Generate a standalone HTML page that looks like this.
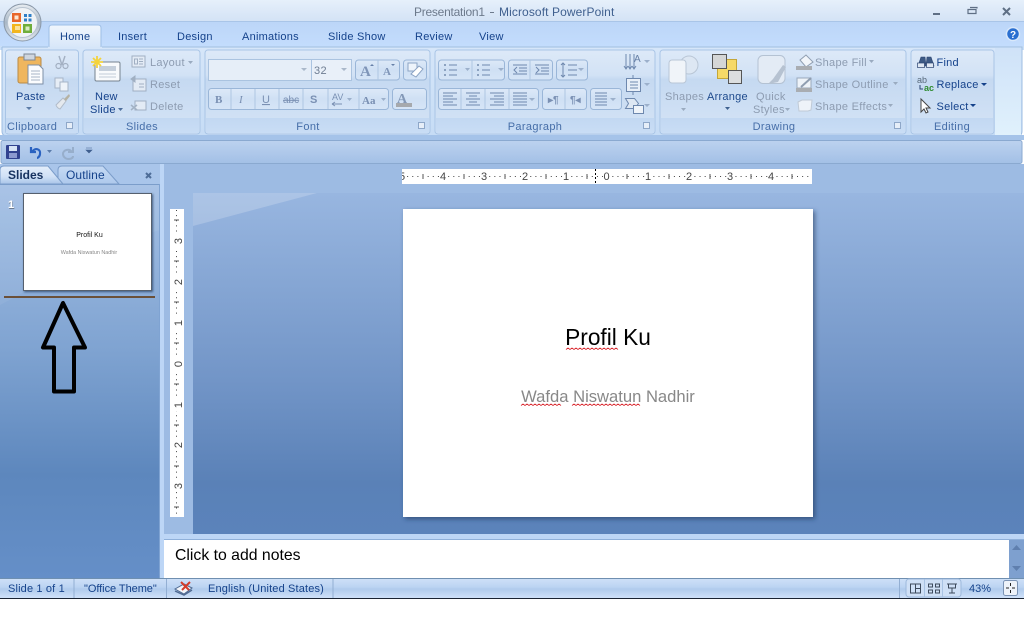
<!DOCTYPE html>
<html><head><meta charset="utf-8"><style>
html,body{margin:0;padding:0;width:1024px;height:632px;overflow:hidden;background:#fff}
svg{display:block}
text{font-family:"Liberation Sans",sans-serif;font-size:11px}
.t{fill:#15428b;font-size:11px;letter-spacing:.25px}
.d{fill:#8d9cb1;letter-spacing:.3px}
.a{fill:#1e4a8c;letter-spacing:.25px}
.c{fill:#466ea8;letter-spacing:.35px;text-anchor:middle}
.s{fill:#15428b;letter-spacing:.15px}
.r{fill:#444;font-size:11px;text-anchor:middle}
.b{fill:url(#btn);stroke:#9ab6d8;stroke-width:1}
</style></head><body>
<svg width="1024" height="632" viewBox="0 0 1024 632" xmlns="http://www.w3.org/2000/svg">
<defs>
<linearGradient id="title" x1="0" y1="0" x2="0" y2="1"><stop offset="0" stop-color="#e6f0fb"/><stop offset="1" stop-color="#d3e2f5"/></linearGradient>
<linearGradient id="tabs" x1="0" y1="0" x2="0" y2="1"><stop offset="0" stop-color="#bcd6f8"/><stop offset="1" stop-color="#c3dcfd"/></linearGradient>
<linearGradient id="rib" x1="0" y1="0" x2="0" y2="1"><stop offset="0" stop-color="#d6e6f9"/><stop offset="1" stop-color="#c6dcf5"/></linearGradient>
<linearGradient id="rend" x1="0" y1="0" x2="0" y2="1"><stop offset="0" stop-color="#cfe2f8"/><stop offset="1" stop-color="#e0f1fc"/></linearGradient>
<linearGradient id="grp" x1="0" y1="0" x2="0" y2="1"><stop offset="0" stop-color="#dde9f8"/><stop offset=".3" stop-color="#d2e2f5"/><stop offset=".35" stop-color="#c5d9f1"/><stop offset="1" stop-color="#d5e4f6"/></linearGradient>
<linearGradient id="cap" x1="0" y1="0" x2="0" y2="1"><stop offset="0" stop-color="#c2d8f2"/><stop offset="1" stop-color="#c9ddf5"/></linearGradient>
<linearGradient id="btn" x1="0" y1="0" x2="0" y2="1"><stop offset="0" stop-color="#dde9f8"/><stop offset=".5" stop-color="#cfe0f4"/><stop offset="1" stop-color="#d6e5f7"/></linearGradient>
<linearGradient id="qat" x1="0" y1="0" x2="0" y2="1"><stop offset="0" stop-color="#bcd2ef"/><stop offset="1" stop-color="#a3c0e6"/></linearGradient>
<linearGradient id="left" x1="0" y1="0" x2="0" y2="1"><stop offset="0" stop-color="#a9c4e8"/><stop offset=".45" stop-color="#7fa3d1"/><stop offset=".75" stop-color="#5d87bd"/><stop offset="1" stop-color="#658fc8"/></linearGradient>
<linearGradient id="main" x1="0" y1="0" x2="0" y2="1"><stop offset="0" stop-color="#98b6e0"/><stop offset=".55" stop-color="#7295c7"/><stop offset=".85" stop-color="#5a81b7"/><stop offset="1" stop-color="#5b83bb"/></linearGradient>
<linearGradient id="stat" x1="0" y1="0" x2="0" y2="1"><stop offset="0" stop-color="#cfe1f8"/><stop offset=".45" stop-color="#bcd4f2"/><stop offset=".55" stop-color="#b0cbec"/><stop offset="1" stop-color="#cfe1f9"/></linearGradient>
<linearGradient id="tab1" x1="0" y1="0" x2="0" y2="1"><stop offset="0" stop-color="#e4eefb"/><stop offset=".6" stop-color="#cfe0f6"/><stop offset="1" stop-color="#a9c4e8"/></linearGradient>
<linearGradient id="tab2" x1="0" y1="0" x2="0" y2="1"><stop offset="0" stop-color="#c6daf4"/><stop offset="1" stop-color="#aec9ec"/></linearGradient>
<linearGradient id="home" x1="0" y1="0" x2="0" y2="1"><stop offset="0" stop-color="#f0f6fd"/><stop offset="1" stop-color="#d8e7f9"/></linearGradient>
<linearGradient id="orb" x1="0" y1="0" x2="0" y2="1"><stop offset="0" stop-color="#e8edf2"/><stop offset=".5" stop-color="#a9b7c6"/><stop offset="1" stop-color="#e3e9ef"/></linearGradient>
<filter id="sh" x="-10%" y="-10%" width="125%" height="125%"><feDropShadow dx="2" dy="2" stdDeviation="2.5" flood-color="#1d3557" flood-opacity=".6"/></filter>
<filter id="sh2" x="-10%" y="-10%" width="125%" height="125%"><feDropShadow dx="1" dy="1" stdDeviation="1" flood-color="#1d3557" flood-opacity=".7"/></filter>
</defs>

<!-- title bar -->
<rect width="1024" height="22" fill="url(#title)"/>
<rect y="21" width="1024" height="1" fill="#a9c5e8"/>
<text x="414" y="16" textLength="71" style="font-size:12px;fill:#6d7a8c">Presentation1</text>
<rect x="490" y="12" width="4" height="1" fill="#6d7a8c"/>
<text x="499" y="16" style="font-size:12px;fill:#40608f;letter-spacing:.1px">Microsoft PowerPoint</text>
<rect x="933" y="13" width="7" height="2" fill="#5f6f85"/>
<path d="M968 9.500h8v4h-8zM970 7.500h7v1" fill="none" stroke="#5f6f85" stroke-width="1.200"/>
<path d="M1003 8l7 7M1010 8l-7 7" stroke="#5f6f85" stroke-width="2" fill="none"/>

<!-- tab row -->
<rect y="22" width="1024" height="24" fill="url(#tabs)"/>
<rect y="46" width="1024" height="4" fill="#c9dff8"/>
<path d="M49 47V28q0-3 3-3h46q3 0 3 3v19" fill="url(#home)" stroke="#9ebfe6"/>
<text x="60" y="40" class="t">Home</text>
<text x="118" y="40" class="t">Insert</text>
<text x="177" y="40" class="t">Design</text>
<text x="242" y="40" class="t">Animations</text>
<text x="328" y="40" class="t">Slide Show</text>
<text x="415" y="40" class="t">Review</text>
<text x="479" y="40" class="t">View</text>
<circle cx="1013" cy="34" r="6.500" fill="#2a6fd0" stroke="#d9e8fa" stroke-width="1.500"/>
<text x="1013" y="38" text-anchor="middle" style="font-size:10px;font-weight:bold;fill:#fff">?</text>

<!-- ribbon -->
<path d="M2 47H48M102 47H1022V131q0 5-5 5H7q-5 0-5-5V47" fill="url(#rib)" stroke="#9dbde2"/>
<rect x="995" y="48" width="26" height="87" fill="url(#rend)"/>
<g fill="url(#grp)" stroke="#a9c5e6">
<rect x="5.500" y="50" width="73" height="84" rx="3"/>
<rect x="83" y="50" width="117" height="84" rx="3"/>
<rect x="205" y="50" width="225" height="84" rx="3"/>
<rect x="435" y="50" width="220" height="84" rx="3"/>
<rect x="660" y="50" width="246" height="84" rx="3"/>
<rect x="911" y="50" width="83" height="84" rx="3"/>
</g>
<g fill="url(#cap)">
<rect x="6" y="118" width="72" height="15"/><rect x="84" y="118" width="115" height="15"/><rect x="206" y="118" width="223" height="15"/><rect x="436" y="118" width="218" height="15"/><rect x="661" y="118" width="244" height="15"/><rect x="912" y="118" width="81" height="15"/>
</g>
<text x="7" y="130" class="c" style="text-anchor:start">Clipboard</text>
<text x="142" y="130" class="c">Slides</text>
<text x="308" y="130" class="c">Font</text>
<text x="535" y="130" class="c">Paragraph</text>
<text x="774" y="130" class="c">Drawing</text>
<text x="952" y="130" class="c">Editing</text>
<g fill="#e6eef8" stroke="#8ea7c8">
<rect x="66.500" y="122.500" width="6" height="6"/><rect x="418.500" y="122.500" width="6" height="6"/><rect x="643.500" y="122.500" width="6" height="6"/><rect x="894.500" y="122.500" width="6" height="6"/>
</g>

<!-- orb -->
<circle cx="22.500" cy="22.500" r="18.500" fill="url(#orb)" stroke="#8a98a8"/>
<circle cx="22.500" cy="22.500" r="15" fill="#f0f3f6" stroke="#b8c4d0"/>
<path d="M12 13h9v9h-9z" fill="#e8672a"/><path d="M14.500 15.500h4v4h-4z" fill="#fbe7d2"/>
<path d="M12 24h9v9h-9z" fill="#f2b61e"/><path d="M15 26h5v4h-5z" fill="#fbe39a"/>
<path d="M23 24h9v9h-9z" fill="#6fae3a"/><path d="M25.500 26.500h4v4h-4z" fill="#d9ecc4"/>
<g fill="#2f7fc7"><rect x="24" y="14" width="3" height="3"/><rect x="28.500" y="14" width="3" height="3"/><rect x="24" y="18.500" width="3" height="3"/><rect x="28.500" y="18.500" width="3" height="3"/></g>

<!-- Clipboard -->
<rect x="18" y="57" width="23" height="26" rx="2" fill="#efb65e" stroke="#b98a45"/>
<rect x="24" y="54" width="11" height="6" fill="#cfd6df" stroke="#7d8794"/>
<path d="M28 65h11l4 4v15H28z" fill="#fbfcfe" stroke="#7e8fa6"/>
<path d="M31 71h9M31 74h9M31 77h9M31 80h9" stroke="#a7b5c7"/>
<text x="16" y="100" class="t">Paste</text>
<path d="M26 107h6l-3 3z" fill="#5d7da8"/>
<path d="M59 56l3 9M65 56l-3 9" stroke="#a3b0c2" stroke-width="1.400" fill="none"/><circle cx="58.500" cy="66" r="2.500" fill="none" stroke="#a3b0c2" stroke-width="1.200"/><circle cx="65.500" cy="66" r="2.500" fill="none" stroke="#a3b0c2" stroke-width="1.200"/>
<rect x="55" y="78" width="8" height="10" fill="#e6edf6" stroke="#a6b4c7"/><rect x="60" y="82" width="8" height="9" fill="#eef3f9" stroke="#a6b4c7"/>
<path d="M56 105l7-7 3 3-6 8q-3-1-4-4z" fill="#e5e9ee" stroke="#b2bcc9"/><path d="M64 99l5-5 1 2-4 5z" fill="#b5b2a3"/>

<!-- Slides -->
<rect x="95" y="62" width="25" height="19" rx="1.500" fill="#f8fafc" stroke="#76838f"/>
<rect x="99" y="66" width="17" height="5" fill="#c5cfdb"/><path d="M99 74h17M99 77h17" stroke="#c2ccd9"/>
<path d="M97 56v12M91 62h12M93 58l8 8M101 58l-8 8" stroke="#f4d33c" stroke-width="1.800"/>
<text x="95" y="100" class="t">New</text>
<text x="90" y="113" class="t">Slide</text>
<path d="M118 108h5l-2.500 3z" fill="#4f6f9c"/>
<rect x="132" y="56" width="13" height="11" fill="#e3ebf5" stroke="#a0afc2"/><path d="M139 59h4M139 61.500h4M139 64h4M134.500 59h3v5h-3z" stroke="#a0afc2" fill="none"/>
<text x="150" y="66" class="d">Layout</text><path d="M188 61h5l-2.500 3z" fill="#9aabc0"/>
<rect x="133" y="79" width="13" height="12" fill="#e3ebf5" stroke="#a0afc2"/><path d="M131 79l4-3v6zM135 79h5" fill="#a0afc2" stroke="#a0afc2"/><path d="M139 84h5M139 87h5" stroke="#a0afc2"/>
<text x="150" y="88" class="d">Reset</text>
<rect x="135" y="101" width="11" height="9" fill="#e3ebf5" stroke="#a0afc2"/><path d="M131 105l6 5M137 105l-6 5" stroke="#a3b2c4" stroke-width="1.500"/>
<text x="150" y="110" class="d">Delete</text>

<!-- Font -->
<rect x="208.500" y="59.500" width="103" height="21" fill="#e6eef8" stroke="#aac3e0"/>
<rect x="311.500" y="59.500" width="40" height="21" fill="#e9f0f9" stroke="#aac3e0"/>
<path d="M301 68h6l-3 3zM341 68h6l-3 3z" fill="#aab8ca"/>
<text x="314" y="74" style="font-size:11px;fill:#6e7d92;letter-spacing:.4px">32</text>
<rect x="355.500" y="60" width="44" height="20" rx="3" class="b"/><path d="M378 60v20" stroke="#aec6e2"/>
<text x="360" y="76" style="font-size:15px;font-family:'Liberation Serif',serif;fill:#7f95b8;font-weight:bold">A</text><path d="M370 66l2-2 2 2z" fill="#6680a8"/>
<text x="383" y="75" style="font-size:11px;font-family:'Liberation Serif',serif;fill:#7f95b8;font-weight:bold">A</text><path d="M391 64l2 2 2-2z" fill="#6680a8"/>
<rect x="403.500" y="60" width="23" height="20" rx="3" class="b"/>
<rect x="408" y="63" width="9" height="8" fill="#eef4fb" stroke="#8ca4c4"/><path d="M411 74l8-8 4 3-7 8z" fill="#fff" stroke="#8ca4c4"/>
<rect x="208.500" y="88.500" width="180" height="21" rx="3" class="b"/>
<path d="M231 89v20M255 89v20M279 89v20M303 89v20M328 89v20M359 89v20" stroke="#aec6e2"/>
<text x="215" y="103" style="font-size:11px;font-weight:bold;fill:#7a90b3;font-family:'Liberation Serif',serif">B</text>
<text x="239" y="103" style="font-size:11px;font-style:italic;fill:#7a90b3;font-family:'Liberation Serif',serif">I</text>
<text x="262" y="103" style="font-size:11px;fill:#7a90b3;text-decoration:underline">U</text>
<text x="283" y="103" style="font-size:10px;fill:#7a90b3;text-decoration:line-through">abc</text>
<text x="310" y="103" style="font-size:11px;font-weight:bold;fill:#7a90b3">S</text>
<text x="332" y="100" style="font-size:9px;fill:#7a90b3">AV</text>
<text x="362" y="104" style="font-size:11px;font-weight:bold;fill:#7a90b3;font-family:'Liberation Serif',serif">Aa</text>
<path d="M332 104h10M332 104l3-2M332 104l3 2" stroke="#7a90b3" fill="none"/>
<path d="M347 98h5l-2.500 3zM381 98h5l-2.500 3zM417 98h6l-3 3z" fill="#9cb0cb"/>
<rect x="392.500" y="88.500" width="34" height="21" rx="3" class="b"/>
<text x="397" y="103" style="font-size:14px;font-weight:bold;fill:#8398b7;font-family:'Liberation Serif',serif">A</text>
<rect x="396" y="103" width="16" height="4" fill="#a6a9ad"/>

<!-- Paragraph -->
<rect x="438.500" y="60" width="66" height="20" rx="3" class="b"/><path d="M472 60v20" stroke="#aec6e2"/>
<rect x="508.500" y="60" width="44" height="20" rx="3" class="b"/><path d="M530 60v20" stroke="#aec6e2"/>
<rect x="556.500" y="60" width="31" height="20" rx="3" class="b"/>
<rect x="438.500" y="88.500" width="100" height="21" rx="3" class="b"/><path d="M461 89v20M485 89v20M509 89v20" stroke="#aec6e2"/>
<rect x="542.500" y="88.500" width="44" height="21" rx="3" class="b"/><path d="M565 89v20" stroke="#aec6e2"/>
<rect x="590.500" y="88.500" width="31" height="21" rx="3" class="b"/>
<g stroke="#6e88ae" fill="none">
<path d="M449 65h8M449 70h8M449 75h8M482 65h8M482 70h8M482 75h8"/>
<path d="M444 65h2M444 70h2M444 75h2M477 65h2M477 70h2M477 75h2" stroke-width="2" stroke="#8ca2c0"/>
<path d="M513 65h14M519 68h8M519 71h8M513 74h14M517 67l-3 3 3 3"/>
<path d="M535 65h14M541 68h8M541 71h8M535 74h14M536 67l3 3-3 3"/>
<path d="M563 63v14M561 65l2-2 2 2M561 75l2 2 2-2M568 65h9M568 70h9M568 75h9"/>
<path d="M443 93h14M443 96h10M443 99h14M443 102h10M443 105h14"/>
<path d="M466 93h14M469 96h8M466 99h14M469 102h8M466 105h14"/>
<path d="M490 93h14M494 96h10M490 99h14M494 102h10M490 105h14"/>
<path d="M513 93h14M513 96h14M513 99h14M513 102h14M513 105h14"/>
<path d="M595 93h12M595 96h12M595 99h12M595 102h12M595 105h12"/>
<path d="M626 54v14M630 54v14M634 54v14M624 66l2 3 2-3M628 66l2 3 2-3M632 66l2 3 2-3"/>
<rect x="626.500" y="78.500" width="14" height="13" fill="#e8eff8"/>
<path d="M630 82h8M630 85h8M630 88h8M633 75v3M633 92v3"/>
<path d="M625.500 98.500h9l4 5-4 5h-9l3-5z" fill="#dde7f3"/>
<rect x="633.500" y="105.500" width="10" height="8" fill="#eef3f9"/>
</g>
<text x="548" y="103" style="font-size:10px;font-weight:bold;fill:#7a90b3">▸¶</text>
<text x="570" y="103" style="font-size:10px;font-weight:bold;fill:#7a90b3">¶◂</text>
<text x="634" y="62" style="font-size:10px;fill:#6880a6">A</text>
<path d="M465 68h5l-2.500 3zM498 68h6l-3 3zM578 68h6l-3 3zM529 98h6l-3 3zM610 98h6l-3 3zM644 60h6l-3 3zM644 83h6l-3 3zM644 104h6l-3 3z" fill="#9cb0cb"/>

<!-- Drawing -->
<circle cx="689" cy="65" r="9" fill="#dde7f3" stroke="#b9c6d6"/>
<rect x="669" y="60" width="17" height="23" rx="3" fill="#f0f4f9" stroke="#b9c6d6"/>
<text x="665" y="100" class="d">Shapes</text><path d="M681 108h5l-2.500 3z" fill="#9aabc0"/>
<rect x="712.500" y="54.500" width="14" height="14" fill="#d5d6d6" stroke="#555"/>
<rect x="717.500" y="59.500" width="19" height="19" fill="#f6d968" stroke="#c4a638"/>
<rect x="712.500" y="54.500" width="14" height="14" fill="#d5d6d6" stroke="#555"/>
<rect x="728.500" y="70.500" width="13" height="13" fill="#dcdedf" stroke="#555"/>
<text x="707" y="100" class="a">Arrange</text><path d="M725 107h5l-2.500 3z" fill="#3f618f"/>
<rect x="758" y="55.500" width="27" height="28" rx="5" fill="#e3ebf5" stroke="#b4c2d3"/>
<path d="M768 84l5-5 10-14 3 2-8 15z" fill="#b6c2d1"/>
<text x="756" y="100" class="d">Quick</text>
<text x="753" y="113" class="d">Styles</text><path d="M785 108h5l-2.500 3z" fill="#9aabc0"/>
<path d="M800 60l6-5 7 7-7 5z" fill="#f1f5fa" stroke="#8f9eb1"/><rect x="796" y="66" width="16" height="4" fill="#a9adb2"/>
<text x="815" y="66" class="d">Shape Fill</text><path d="M869 60h5l-2.500 3z" fill="#9aabc0"/>
<rect x="797" y="78" width="14" height="10" fill="#eef3f9" stroke="#9aa9bc"/><path d="M801 87l10-9" stroke="#8f9eb1" stroke-width="2"/><rect x="796" y="88" width="16" height="4" fill="#a9adb2"/>
<text x="815" y="88" class="d">Shape Outline</text><path d="M893 82h5l-2.500 3z" fill="#9aabc0"/>
<path d="M798 102l4-2h10l-1 10-3 1h-9z" fill="#eef3f9" stroke="#c0cad6"/>
<text x="815" y="110" class="d">Shape Effects</text><path d="M888 104h5l-2.500 3z" fill="#9aabc0"/>

<!-- Editing -->
<path d="M918 66l3-9h4l1 9zM926 66l1-9h4l3 9z" fill="#3d5a85" stroke="#2b4470" stroke-width=".6"/>
<rect x="917.500" y="63" width="7" height="4.500" fill="#dfe8f3" stroke="#2b4470" stroke-width=".7"/><rect x="926.500" y="63" width="7" height="4.500" fill="#dfe8f3" stroke="#2b4470" stroke-width=".7"/>
<text x="936.500" y="66" class="t">Find</text>
<text x="917" y="83" style="font-size:9px;fill:#5b6b7c">ab</text>
<text x="924" y="91" style="font-size:9px;font-weight:bold;fill:#2e8b2e">ac</text>
<path d="M920 85v4h3" stroke="#2b4470" fill="none"/>
<text x="936.500" y="88" class="t">Replace</text><path d="M981 83h6l-3 3z" fill="#15428b"/>
<path d="M921 99v13l3-3 2 4 2-1-2-4h4z" fill="#fff" stroke="#444"/>
<text x="936.500" y="110" class="t">Select</text><path d="M970 104h6l-3 3z" fill="#15428b"/>

<!-- separator + QAT -->
<rect y="135" width="1024" height="5" fill="#a5c3e9"/>
<rect x="1" y="140.500" width="1021" height="23" rx="2" fill="url(#qat)" stroke="#8aa9d0"/>
<rect x="6" y="145" width="14" height="14" rx="1" fill="#31428f"/><rect x="9" y="146" width="8" height="5" fill="#d7e4f5"/><rect x="9" y="153" width="8" height="5" fill="#8c9ad0"/>
<path d="M31 147v5h5M32 152c3-5 9-3 8 2 0 2-2 4-3 4" fill="none" stroke="#2a62c0" stroke-width="2.200"/>
<path d="M47 150h5l-2.500 3z" fill="#5b7cab"/>
<path d="M73 147v5h-5M72 152c-3-4-9-2-9 2 0 3 3 5 5 5 3 0 5-1 5-3" fill="none" stroke="#97aecb" stroke-width="2"/>
<path d="M86 148h6M86 150h6l-3 3z" fill="#3f5f8f" stroke="#3f5f8f" stroke-width=".6"/>

<!-- main -->
<rect y="164" width="160" height="414" fill="url(#left)"/>
<path d="M0 305C40 285 90 250 160 230V164H0z" fill="#fff" opacity=".06"/>
<rect x="159" y="164" width="5" height="414" fill="#bdd6f6"/>
<rect x="159" y="164" width="1" height="414" fill="#7fa3d2"/>
<rect x="164" y="164" width="860" height="370" fill="#9dbbe3"/>
<rect x="193" y="193" width="831" height="341" fill="url(#main)"/>
<path d="M193 193H317L193 226z" fill="#fff" opacity=".2"/>
<rect x="164" y="534" width="860" height="6" fill="#bdd6f6"/>
<rect x="164" y="539" width="860" height="1" fill="#8fb0da"/>

<!-- panel tabs -->
<rect y="164" width="160" height="20" fill="#a9c5ea"/>
<path d="M119 184L103 166H62Q58 166 58 170V184z" fill="url(#tab2)" stroke="#7b9dca"/>
<path d="M63 184L48 166H4Q0 166 0 170V184z" fill="url(#tab1)" stroke="#7b9dca"/>
<rect y="184" width="159" height="1" fill="#7b9dca"/>
<text x="8" y="179" style="font-size:12px;font-weight:bold;fill:#15315f">Slides</text>
<text x="66" y="179" style="font-size:12px;fill:#15428b;letter-spacing:.1px">Outline</text>
<path d="M146 173l5 5M151 173l-5 5" stroke="#4e6d98" stroke-width="2"/>

<!-- thumbnail -->
<text x="8.500" y="209" style="font-size:11px;font-weight:bold;fill:#6b7b90">1</text>
<text x="8" y="208" style="font-size:11px;font-weight:bold;fill:#fff">1</text>
<rect x="23.500" y="193.500" width="128" height="97" fill="#fff" stroke="#56606e" filter="url(#sh2)"/>
<text x="89.500" y="237" text-anchor="middle" style="font-size:7px;fill:#111">Profil Ku</text>
<text x="89" y="254" text-anchor="middle" style="font-size:5.400px;fill:#888">Wafda Niswatun Nadhir</text>
<rect x="4" y="296" width="151" height="2" fill="#6b5038"/>
<path d="M63 303L43 347.500H54V391.500H74V347.500H85z" fill="none" stroke="#000" stroke-width="4" stroke-linejoin="round"/>

<!-- top ruler -->
<rect x="402" y="169" width="410" height="15" fill="#fff"/>
<path d="M402 176.500H812" stroke="#444" stroke-width="1" stroke-dasharray="1 4.130" fill="none"/>
<g stroke="#555"><path d="M423 174v5M464 174v5M505 174v5M546 174v5M587 174v5M627 174v5M669 174v5M710 174v5M751 174v5M792 174v5"/></g>
<path d="M595.500 169v15" stroke="#000" stroke-dasharray="2 2"/>
<g fill="#fff">
<rect x="440" y="170" width="7" height="13"/><rect x="481" y="170" width="7" height="13"/><rect x="522" y="170" width="7" height="13"/><rect x="563" y="170" width="7" height="13"/><rect x="603" y="170" width="7" height="13"/><rect x="645" y="170" width="7" height="13"/><rect x="686" y="170" width="7" height="13"/><rect x="727" y="170" width="7" height="13"/><rect x="768" y="170" width="7" height="13"/><rect x="402" y="170" width="4" height="13"/>
</g>
<rect x="396" y="169" width="6" height="15" fill="#9dbbe3"/>
<text x="402" y="180" class="r">5</text><text x="443" y="180" class="r">4</text><text x="484" y="180" class="r">3</text><text x="525" y="180" class="r">2</text><text x="566" y="180" class="r">1</text><text x="606.500" y="180" class="r">0</text><text x="648" y="180" class="r">1</text><text x="689" y="180" class="r">2</text><text x="730" y="180" class="r">3</text><text x="771" y="180" class="r">4</text>
<rect x="396" y="169" width="6" height="15" fill="#9dbbe3"/>

<!-- left ruler -->
<rect x="170" y="209" width="14" height="308" fill="#fff"/>
<path d="M176.500 210V517" stroke="#444" stroke-width="1" stroke-dasharray="1 4.130" fill="none"/>
<g stroke="#555"><path d="M174 220h5M174 261h5M174 302h5M174 343h5M174 384h5M174 425h5M174 466h5M174 507h5"/></g>
<g fill="#fff"><rect x="171" y="235" width="12" height="12"/><rect x="171" y="276" width="12" height="12"/><rect x="171" y="317" width="12" height="12"/><rect x="171" y="358" width="12" height="12"/><rect x="171" y="399" width="12" height="12"/><rect x="171" y="439" width="12" height="12"/><rect x="171" y="480" width="12" height="12"/></g>
<text transform="translate(182,241) rotate(-90)" class="r">3</text>
<text transform="translate(182,282) rotate(-90)" class="r">2</text>
<text transform="translate(182,323) rotate(-90)" class="r">1</text>
<text transform="translate(182,364) rotate(-90)" class="r">0</text>
<text transform="translate(182,405) rotate(-90)" class="r">1</text>
<text transform="translate(182,445) rotate(-90)" class="r">2</text>
<text transform="translate(182,486) rotate(-90)" class="r">3</text>

<!-- slide -->
<rect x="403" y="209" width="410" height="308" fill="#fff" filter="url(#sh)"/>
<text x="608" y="345" text-anchor="middle" style="font-size:22.700px;fill:#000">Profil Ku</text>
<text x="608" y="402" text-anchor="middle" style="font-size:16.600px;fill:#888">Wafda Niswatun Nadhir</text>
<path d="M566 349.500l2-1.500 2 1.500 2-1.500 2 1.500 2-1.500 2 1.500 2-1.500 2 1.500 2-1.500 2 1.500 2-1.500 2 1.500 2-1.500 2 1.500 2-1.500 2 1.500 2-1.500 2 1.500 2-1.500 2 1.500 2-1.500 2 1.500 2-1.500 2 1.500 2-1.500 2 1.500" fill="none" stroke="#d8232a" stroke-width=".8"/>
<path d="M521 405.500l2-1.500 2 1.500 2-1.500 2 1.500 2-1.500 2 1.500 2-1.500 2 1.500 2-1.500 2 1.500 2-1.500 2 1.500 2-1.500 2 1.500 2-1.500 2 1.500 2-1.500 2 1.500 2-1.500 2 1.500M572 405.500l2-1.500 2 1.500 2-1.500 2 1.500 2-1.500 2 1.500 2-1.500 2 1.500 2-1.500 2 1.500 2-1.500 2 1.500 2-1.500 2 1.500 2-1.500 2 1.500 2-1.500 2 1.500 2-1.500 2 1.500 2-1.500 2 1.500 2-1.500 2 1.500 2-1.500 2 1.500 2-1.500 2 1.500 2-1.500 2 1.500 2-1.500 2 1.500 2-1.500 2 1.500" fill="none" stroke="#d8232a" stroke-width=".8"/>

<!-- notes -->
<rect x="164" y="540" width="845" height="38" fill="#fff"/>
<text x="175" y="560" style="font-size:15.800px;fill:#000">Click to add notes</text>
<rect x="1009" y="540" width="15" height="38" fill="#7ea0cf"/>
<path d="M1012 550l4.500-5 4.500 5zM1012 566l4.500 5 4.500-5z" fill="#5f7fae"/>

<!-- status bar -->
<rect y="578" width="1024" height="20" fill="url(#stat)"/>
<rect y="578" width="1024" height="1" fill="#6f8fb0"/>
<rect y="598" width="1024" height="1" fill="#1a2433"/>
<path d="M74 579v19M166.500 579v19M333 579v19M899.500 579v19" stroke="#93afd3"/>
<text x="8" y="592" class="s">Slide 1 of 1</text>
<text x="84" y="592" style="fill:#15428b;letter-spacing:-.05px">"Office Theme"</text>
<path d="M175 589l9-5 8 4-8 6z" fill="#f2f5fa" stroke="#4f6a92"/>
<path d="M175 591l9 4 8-5" fill="none" stroke="#4f6a92" stroke-width="1.500"/>
<path d="M181 582l8 8M190 582l-8 8" stroke="#d33d2c" stroke-width="2"/>
<text x="208" y="592" class="s">English (United States)</text>
<rect x="906" y="579" width="55" height="18" rx="3" fill="#cfe0f6" stroke="#9db9dc"/>
<path d="M924.500 579v18M942.500 579v18" stroke="#a9c3e3"/>
<path d="M910.500 584h10v9h-10zM915.500 584v9M915.500 588.500h5" fill="none" stroke="#3d4a5c"/>
<path d="M928.500 584h4v3h-4zM935.500 584h4v3h-4zM928.500 590h4v3h-4zM935.500 590h4v3h-4z" fill="none" stroke="#3d4a5c"/>
<path d="M947 584h10M948.500 584v4h7v-4M952 588v5M949 593h6" fill="none" stroke="#3d4a5c"/>
<text x="969" y="592" style="font-size:11px;fill:#15428b">43%</text>
<rect x="1003.500" y="580.500" width="14" height="15" rx="2" fill="#edf2f9" stroke="#7a92b4"/>
<path d="M1010.500 583v3M1010.500 590v3M1006 588h3M1012 588h3" stroke="#222"/>
</svg>
</body></html>
